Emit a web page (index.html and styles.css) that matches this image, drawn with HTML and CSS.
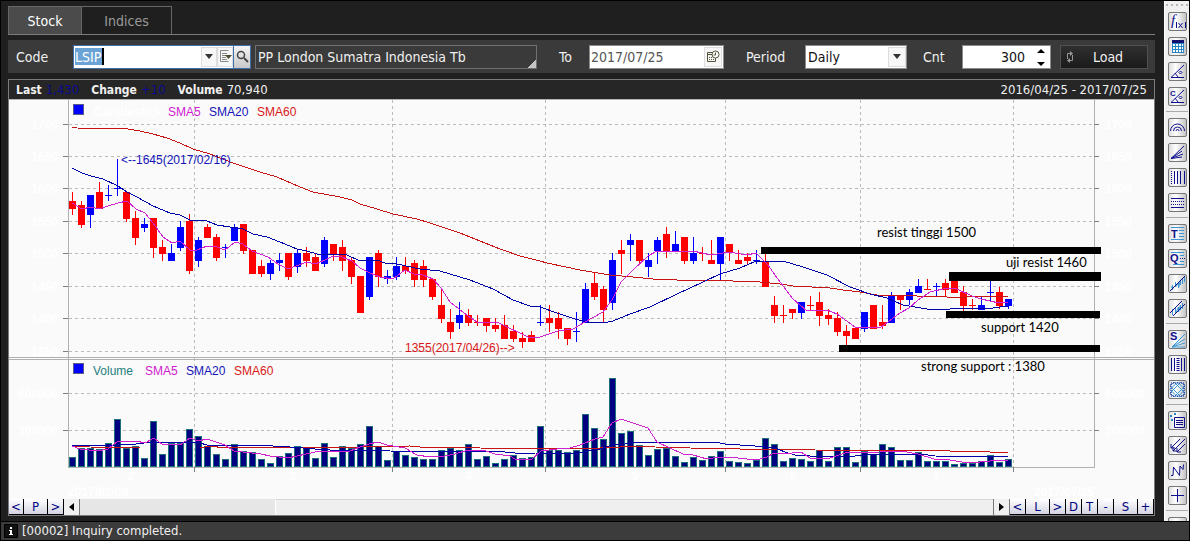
FILE: index.html
```html
<!DOCTYPE html>
<html lang="en">
<head>
<meta charset="utf-8">
<title>Stock chart</title>
<link rel="stylesheet" href="styles.css">
</head>
<body>
<div class="app">
  <div class="workspace">
    <main class="main">
      <nav class="tabs">
        <button class="tab tab-active" type="button">Stock</button>
        <button class="tab" type="button">Indices</button>
      </nav>

      <form class="controls">
        <label class="label" for="code">Code</label>
        <div class="field code-field">
          <input class="code-input" id="code" type="text" value="LSIP">
          <button class="mini" type="button" aria-label="Open list"><svg width="8" height="5" viewBox="0 0 8 5"><path d="M0 0h8L4 5z" fill="#333"/></svg></button>
          <button class="mini" type="button" aria-label="History"><svg width="13" height="13" viewBox="0 0 13 13"><path d="M9.500 .5h-8v11h8M3 3.500h5M3 5.500h4M3 7.500h4M3 9.500h5" fill="none" stroke="#888"/><path d="M6 5h7L9.500 9z" fill="#4d4a30"/></svg></button>
          <button class="search" type="button" aria-label="Search"><svg width="13" height="13" viewBox="0 0 13 13"><circle cx="5" cy="5" r="3.500" fill="none" stroke="#444" stroke-width="1.500"/><path d="M8 8l4 4" stroke="#444" stroke-width="2"/></svg></button>
        </div>
        <output class="name-box" for="code">PP London Sumatra Indonesia Tb</output>
        <label class="label label-to" for="date">To</label>
        <div class="field date-field">
          <input class="date-input" id="date" type="text" value="2017/07/25">
          <button class="mini mini-date" type="button" aria-label="Pick date"><svg width="13" height="13" viewBox="0 0 13 13"><path d="M.5 2.500h6M.5 2.500v9h8V8M.5 4.500h5" fill="none" stroke="#55533a"/><circle cx="8.500" cy="4.500" r="3.500" fill="#fff" stroke="#55533a"/><path d="M8.500 5V2.500M8.500 5h-2" stroke="#55533a" fill="none"/><path d="M2 7h1v1H2zM4 7h1v1H4zM2 9h1v1H2zM4 9h1v1H4zM6 9h1v1H6z" fill="#55533a"/></svg></button>
        </div>
        <label class="label label-period" for="period">Period</label>
        <div class="field select-field">
          <select class="select" id="period"><option>Daily</option><option>Weekly</option><option>Monthly</option></select>
          <span class="mini mini-select"><svg width="8" height="5" viewBox="0 0 8 5"><path d="M0 0h8L4 5z" fill="#333"/></svg></span>
        </div>
        <label class="label label-cnt" for="cnt">Cnt</label>
        <div class="field cnt-field">
          <input class="cnt-input" id="cnt" type="text" value="300">
          <div class="spin">
            <button class="spin-button" type="button" aria-label="More"><svg width="8" height="4" viewBox="0 0 8 4"><path d="M0 4h8L4 0z"/></svg></button>
            <button class="spin-button" type="button" aria-label="Fewer"><svg width="8" height="4" viewBox="0 0 8 4"><path d="M0 0h8L4 4z"/></svg></button>
          </div>
        </div>
        <button class="load" type="button"><svg width="8" height="12" viewBox="0 0 8 12"><path d="M5 2.500H1.500V8M3 9.500h3.500V4" fill="none" stroke="#999"/><path d="M4 0l3 2.500L4 5zM4 7L1 9.500 4 12z" fill="#999"/></svg><span class="load-text">Load</span></button>
      </form>

      <section class="panel">
        <div class="info">
          <b>Last</b><span class="info-value info-blue">1,430</span>
          <b>Change</b><span class="info-value info-blue">+10</span>
          <b>Volume</b><span class="info-value">70,940</span>
          <span class="info-range">2016/04/25 - 2017/07/25</span>
        </div>

        <svg class="chart" viewBox="9 100 1145 399" role="img" aria-label="Candlestick and volume chart">
          <g class="grid">
            <path d="M69 124.500H1094M69 156.500H1094M69 188.500H1094M69 221.500H1094M69 253.500H1094M69 286.500H1094M69 318.500H1094M69 351.500H1094M69 393.500H1094M69 430.500H1094"/>
            <path d="M194.500 100V467M392.500 100V467M545.500 100V467M725.500 100V467M860.500 100V467M1013.500 100V467"/>
          </g>
          <path class="axis" d="M68.500 100V467.500H1094.500V100M9 357.500H1154M9 359.500H1154"/>
          <path class="tick" d="M63 124.500h5M63 156.500h5M63 188.500h5M63 221.500h5M63 253.500h5M63 286.500h5M63 318.500h5M63 351.500h5M63 393.500h5M63 430.500h5M1094 124.500h5M1094 156.500h5M1094 188.500h5M1094 221.500h5M1094 253.500h5M1094 286.500h5M1094 318.500h5M1094 351.500h5M1094 393.500h5M1094 430.500h5M194.500 467v5M392.500 467v5M545.500 467v5M725.500 467v5M860.500 467v5M1013.500 467v5"/>
          <g class="faint faint-left">
            <text x="58" y="129">1700</text><text x="58" y="161">1650</text><text x="58" y="193">1600</text><text x="58" y="226">1550</text><text x="58" y="258">1500</text><text x="58" y="291">1450</text><text x="58" y="323">1400</text><text x="58" y="356">1350</text><text x="58" y="398">600000</text><text x="58" y="435">300000</text><text x="1094" y="496">2017/07/25</text>
          </g>
          <g class="faint">
            <text x="94" y="116">Candlestick</text>
            <text x="1105" y="129">1700</text><text x="1105" y="161">1650</text><text x="1105" y="193">1600</text><text x="1105" y="226">1550</text><text x="1105" y="258">1500</text><text x="1105" y="291">1450</text><text x="1105" y="323">1400</text><text x="1105" y="356">1350</text><text x="1105" y="398">600000</text><text x="1105" y="435">300000</text>
            <text x="128" y="480">2</text><text x="289" y="480">3</text><text x="465" y="480">4</text><text x="632" y="480">5</text><text x="790" y="480">6</text><text x="933" y="480">7</text><text x="68" y="496">2017/02/08</text>
          </g>
          <g id="volumes"></g>
          <g class="lines">
            <polyline class="sma60" points="72,446 90,447 140,448 200,448 210,446 225,448 360,447 410,446 420,447 470,447 480,448 580,449 620,447 640,446 655,447 690,448 740,449 765,450 790,449 815,450 950,451 990,452 1008,452"/>
            <polyline class="sma20" points="72,445 118,445 136,444 152,442 200,443 207,445 255,445 290,447 315,449 330,450 375,450 390,451 430,452 440,451 495,451 515,453 535,453 575,454 588,451 600,449 612,445 625,444 638,442 657,443 665,442 715,442 725,444 755,446 775,448 785,452 795,455 810,456 855,456 880,454 920,454 935,456 1008,457"/>
            <polyline class="sma5" points="72,446 80,449 97,451 108,449 118,441 136,441 145,443 154,438 163,445 172,444 180,445 190,438 198,441 207,439 216,442 225,445 234,451 243,452 261,454 270,456 288,458 306,454 320,451 350,451 360,447 369,444 378,442 387,445 405,448 417,455 430,457 445,456 455,454 468,450 486,451 495,454 510,456 515,459 532,459 541,451 557,449 570,448 580,445 595,439 603,437 612,423 621,419 648,428 657,442 670,448 683,454 693,455 707,459 720,457 738,458 756,460 767,457 774,453 792,453 801,452 810,458 830,458 845,453 880,452 901,451 918,454 934,459 950,460 962,462 980,462 990,461 1008,460"/>
          </g>
          <g id="candles"></g>
          <g class="lines">
            <polyline class="sma60" points="72,127 77,128 128,129 140,131 153,134 167,138 180,143 193,149 210,154 220,158 233,163 260,172 277,177 300,187 313,192 340,197 352,200 360,204 377,209 393,214 417,219 430,223 460,233 480,241 500,249 520,256 540,261 547,263 580,270 610,275 633,277 653,279 677,280 720,280 733,281 760,282 780,284 793,286 830,288 843,290 860,292 877,295 893,295 917,296 947,297 967,297 993,296 1008,297"/>
            <polyline class="sma20" points="72,168 82,173 91,176 103,179 118,186 127,192 137,197 153,206 170,213 180,215 190,220 207,221 217,225 243,229 253,234 267,237 280,242 297,249 307,251 317,254 347,255 360,261 377,260 385,263 397,264 420,269 440,271 470,280 493,289 513,300 530,306 540,307 557,313 575,319 587,322 603,323 613,321 630,314 650,307 677,294 703,282 720,274 740,268 756,261 783,261 803,267 827,275 850,287 870,294 887,298 903,305 927,309 950,309 973,308 993,308 1008,306"/>
            <polyline class="sma5" points="72,203 82,209 91,207 99,209 108,206 118,203 127,201 136,209 145,213 153,223 163,237 172,243 180,241 190,250 197,250 207,246 217,247 225,250 235,242 243,244 252,251 268,257 278,264 288,269 307,262 315,264 325,260 333,256 342,257 352,261 360,268 370,273 380,277 393,279 405,270 414,274 423,275 433,279 441,288 450,302 459,309 468,316 477,322 497,322 507,327 520,333 528,337 540,337 558,331 573,329 585,322 603,312 612,300 621,282 633,270 648,256 657,251 693,251 711,255 729,252 747,255 756,253 768,265 780,282 793,299 807,311 827,310 837,314 855,327 880,328 893,318 900,313 909,308 918,300 930,292 947,288 957,289 972,296 981,299 999,303 1008,302"/>
          </g>
          <g class="key"><rect x="73.500" y="104.500" width="10" height="10"/><rect x="73.500" y="363.500" width="10" height="10"/></g>
          <g class="legend">
            <text class="t-pink" x="168" y="116">SMA5</text><text class="t-blue" x="209" y="116">SMA20</text><text class="t-red" x="257" y="116">SMA60</text>
            <text class="t-teal" x="93" y="375">Volume</text><text class="t-pink" x="145" y="375">SMA5</text><text class="t-blue" x="186" y="375">SMA20</text><text class="t-red" x="234" y="375">SMA60</text>
            <text class="t-blue" x="121" y="164">&lt;--1645(2017/02/16)</text>
            <text class="t-red" x="405" y="352">1355(2017/04/26)--&gt;</text>
          </g>
          <path class="levels" d="M761 247h340v7H761zM949 272h152v9H949zM946 311h154v7H946zM839 345h261v7H839z"/>
          <g class="notes">
            <text x="877" y="237">resist tinggi 1500</text><text x="1006" y="267">uji resist 1460</text><text x="981" y="332">support 1420</text><text x="921" y="371">strong support : 1380</text>
          </g>
        </svg>

        <div class="scroller">
          <button class="step step-first" type="button">&lt;</button><button class="step step-wide" type="button">P</button><button class="step" type="button">&gt;</button>
          <button class="arrow" type="button" aria-label="Scroll left"><svg width="5" height="8" viewBox="0 0 5 8"><path d="M5 0v8L0 4z"/></svg></button>
          <div class="track"><div class="track-gap"></div><div class="thumb"></div></div>
          <button class="arrow arrow-right" type="button" aria-label="Scroll right"><svg width="5" height="8" viewBox="0 0 5 8"><path d="M0 0v8l5-4z"/></svg></button>
          <button class="step" type="button">&lt;</button><button class="step step-wide" type="button">L</button><button class="step" type="button">&gt;</button><button class="step" type="button">D</button><button class="step" type="button">T</button><button class="step" type="button">-</button><button class="step step-wide" type="button">S</button><button class="step" type="button">+</button>
        </div>
      </section>
    </main>

    <aside class="tools">
      <div class="grip"></div>
      <button class="tool" type="button" aria-label="Function"><svg viewBox="1 1 17 17"><text class="fx" x="3" y="13">f</text><path d="M8.500 10v6M17.500 10v6M10.500 11l4 5M14.500 11l-4 5"/></svg></button>
      <button class="tool" type="button" aria-label="Table"><svg viewBox="1 1 17 17"><path d="M4 3h12v13H4z" class="fill-sky"/><path d="M4 3h12v3H4z" class="fill-navy"/><path d="M5 7h2v2H5zM8 7h2v2H8zM11 7h2v2h-2zM14 7h1v2h-1zM5 10h2v2H5zM8 10h2v2H8zM11 10h2v2h-2zM14 10h1v2h-1zM5 13h2v2H5zM8 13h2v2H8zM11 13h2v2h-2zM14 13h1v2h-1z" class="fill-white"/></svg></button>
      <button class="tool" type="button" aria-label="Angle"><svg viewBox="1 1 17 17"><path d="M16 3L3 15.500h13M7 11l3 4M12.500 9l1.500 1.500-1.500 1.500-1.500-1.500z"/></svg></button>
      <button class="tool" type="button" aria-label="Copied angle"><svg viewBox="1 1 17 17"><path d="M16 3L3 15.500h13M7 11l3 4M12.500 9l1.500 1.500-1.500 1.500-1.500-1.500z"/><text class="letter-small" x="2" y="9">C</text></svg></button>
      <hr class="rule">
      <button class="tool" type="button" aria-label="Arcs"><svg viewBox="1 1 17 17"><path d="M2.500 13a7 7 0 0 1 14 0M5.500 13a4 4 0 0 1 8 0M8 13a1.500 1.500 0 0 1 3 0"/></svg></button>
      <button class="tool" type="button" aria-label="Fan"><svg viewBox="1 1 17 17"><path d="M3 15.500L16 3M3 15.500L14 8M3 15.500L15 11M3 15.500L14 14"/></svg></button>
      <button class="tool" type="button" aria-label="Time zones"><svg viewBox="1 1 17 17"><path d="M6.500 3v13M9.500 3v13M12.500 3v13M16.500 3v13"/><path d="M3.500 3v13" class="dotted"/></svg></button>
      <button class="tool" type="button" aria-label="Levels"><svg viewBox="1 1 17 17"><path d="M3 5.500h13M3 14.500h13"/><path d="M3 8.500h13M3 11.500h13" class="dotted"/></svg></button>
      <hr class="rule">
      <button class="tool" type="button" aria-label="Text"><svg viewBox="1 1 17 17"><path d="M3 3.500h13M11 6.500h5M11 9.500h5M11 12.500h5M3 15.500h13" class="sky"/><text class="letter" x="3" y="14">T</text></svg></button>
      <button class="tool" type="button" aria-label="Quote"><svg viewBox="1 1 17 17"><path d="M3 3.500h13M12 6.500h4M12 12.500h4M5 15.500h11" class="sky"/><path d="M12 9.500h5" class="dotted"/><text class="letter" x="2" y="13">Q</text></svg></button>
      <button class="tool" type="button" aria-label="Trend"><svg viewBox="1 1 17 17"><path d="M4.500 11v5M3 13l3 1M7.500 8v5l3-4v5l2-8v5M14.500 4v6M16.500 2v6" class="sky"/><path d="M2 17L17 2"/></svg></button>
      <button class="tool" type="button" aria-label="Channel"><svg viewBox="1 1 17 17"><path d="M4.500 10v6M7.500 8v6l3-6v5l2-7v5M14.500 4v6" class="sky"/><path d="M2 14L14 2M5 17L17 5"/></svg></button>
      <hr class="rule">
      <button class="tool" type="button" aria-label="Speed lines"><svg viewBox="1 1 17 17"><path d="M4 17L17 4M4 17L17 9M4 17l13-4M4 17h13" class="sky"/><text class="letter" x="2" y="10">S</text></svg></button>
      <button class="tool" type="button" aria-label="Cycle"><svg viewBox="1 1 17 17"><path d="M3.500 3v13M6.500 3v13M13.500 3v13M16.500 3v13"/><path d="M10 3v13" class="ladder"/></svg></button>
      <button class="tool" type="button" aria-label="Pattern"><svg viewBox="1 1 17 17"><path d="M2 6l4-4 11 11-4 4L2 6M2 13L13 2l4 4L6 17l-4-4M2 9.500L9.500 2 17 9.500 9.500 17z" class="sky"/><path d="M3 3h13v13H3z" class="dotted"/></svg></button>
      <hr class="rule">
      <button class="tool" type="button" aria-label="Notes"><svg viewBox="1 1 17 17"><path d="M2 4h2v2H2zM6 2h2v2H6zM3 8h2v2H3z" class="fill-sky"/><path d="M6.500 6.500h10v10h-10zM8 9.500h7M8 11.500h7M8 13.500h7"/></svg></button>
      <button class="tool" type="button" aria-label="Arrows"><svg viewBox="1 1 17 17"><path d="M12 3l-9 9M17 3L5 15M17 8l-8 8M3 8v4h4M5 11v4h4M9 12v4h4"/></svg></button>
      <button class="tool" type="button" aria-label="Zigzag"><svg viewBox="1 1 17 17"><path d="M3 14.500h2L5.500 6l6 8.500L12 5l3 3.500 .5-5"/></svg></button>
      <button class="tool" type="button" aria-label="Crosshair"><svg viewBox="1 1 17 17"><path d="M9.500 3v13M3 9.500h13"/></svg></button>
      <hr class="rule">
      <button class="tool" type="button" aria-label="More tools"></button>
    </aside>
  </div>

  <footer class="status"><svg class="status-icon" width="14" height="14" viewBox="0 0 14 14"><path d="M.5.5h13v13H.5z" fill="#111" stroke="#000"/><path d="M6 3h2v2H6zM5 6h3v4h1v1H5v-1h1V7H5z" fill="#fff"/></svg><span>[00002] Inquiry completed.</span></footer>
</div>
<script src="chart.js"></script>
</body>
</html>
```
FILE: chart.js
```js
// Each candle: colour, then the y of its high, body top, body bottom and low.
const candles = `R 192 201 209 215|R 201 205 225 228|B 195 195 215 228|R 182 192 209 209|B 185 195 196 201|B 159 188 189 196|R 192 192 219 222|R 211 218 238 245|B 218 224 228 232|R 218 218 248 258|R 240 247 254 261|B 244 253 261 261|B 221 227 248 251|R 214 221 271 274|B 237 240 261 267|R 224 227 238 238|R 234 237 258 261|B 244 247 248 258|B 224 227 241 241|R 224 224 251 254|R 250 250 274 274|R 260 266 274 277|B 260 263 274 280|B 253 260 263 271|R 253 253 277 280|B 250 253 267 273|R 247 253 261 267|R 254 257 271 271|B 237 240 264 267|R 244 244 255 261|R 240 247 261 271|R 257 260 277 284|R 276 276 313 313|B 257 257 297 300|R 250 253 277 287|B 270 276 279 284|B 257 266 277 280|R 257 266 271 274|R 260 263 280 287|R 260 266 280 287|R 279 279 297 300|R 288 305 319 323|R 309 322 332 339|B 302 315 323 329|R 309 315 323 326|R 315 322 323 326|R 318 318 326 332|R 318 325 329 332|R 315 325 339 339|R 325 331 339 342|R 332 338 342 348|R 331 335 342 342|B 305 322 323 326|R 305 318 323 332|R 312 318 329 339|R 328 328 339 345|B 312 331 332 342|B 283 289 323 323|R 273 283 297 300|R 286 289 310 323|B 253 260 303 310|R 240 250 254 274|B 234 240 245 261|R 240 240 261 264|B 253 260 267 277|B 237 240 251 264|R 227 234 251 258|B 231 244 251 251|R 237 237 261 264|B 237 253 261 264|R 247 253 254 261|R 240 260 264 264|B 237 237 264 280|R 244 244 253 261|R 250 260 264 264|R 253 257 261 264|B 250 260 261 264|R 253 261 287 287|R 296 305 316 323|R 305 315 316 323|R 309 309 313 319|B 302 302 313 319|R 296 305 306 311|R 292 302 316 326|R 309 315 319 325|R 312 318 332 336|R 325 331 336 345|R 328 328 339 339|B 312 312 329 332|R 305 305 329 329|R 305 322 326 329|B 292 296 323 323|R 295 295 300 310|B 289 292 300 305|B 279 286 293 293|R 279 289 290 290|B 283 286 287 296|R 279 283 290 296|R 280 280 293 293|R 286 292 306 311|R 299 305 306 310|B 296 305 310 310|B 280 292 293 301|R 287 292 306 309|B 299 299 306 309`
  .split("|").map((row) => row.split(" "));

// Bar heights of the volume pane.
const volumes = [10,19,19,18,24,48,19,21,9,46,13,24,24,38,31,21,13,8,23,16,15,8,4,11,14,21,19,9,24,10,21,19,23,41,21,7,16,12,10,8,8,17,19,17,23,8,11,4,8,12,9,10,41,17,17,15,17,53,39,28,89,34,36,22,12,18,19,11,5,10,7,11,16,6,5,4,7,29,23,6,9,8,6,17,6,20,20,5,16,13,23,20,7,7,15,6,6,6,3,4,4,6,12,5,8];

const SVG = "http://www.w3.org/2000/svg";
const FIRST_X = 69, STEP = 9, BODY = 7, BASE = 467;

function addRect(parent, className, x, y, width, height) {
  const rect = document.createElementNS(SVG, "rect");
  Object.entries({ class: className, x, y, width, height })
    .forEach(([name, value]) => rect.setAttribute(name, value));
  parent.append(rect);
}

const candleLayer = document.getElementById("candles");
candles.forEach(([colour, high, top, bottom, low], i) => {
  const x = FIRST_X + i * STEP;
  const className = colour === "R" ? "down" : "up";
  addRect(candleLayer, className, x + 3, +high, 1, low - high);
  addRect(candleLayer, className, x, +top, BODY, bottom - top);
});

const volumeLayer = document.getElementById("volumes");
volumes.forEach((height, i) => {
  addRect(volumeLayer, "volume", FIRST_X + i * STEP + 0.5, BASE - height + 0.5, BODY - 1, height - 1);
});
```
FILE: styles.css
```css
* { box-sizing: border-box; }

body {
  margin: 0;
  background: #1f1f1f;
  color: #f0f0f0;
  font: 14px/20px Tahoma, "DejaVu Sans Condensed", "Noto Sans", sans-serif;
}

button, input, select { font: inherit; color: inherit; }

button {
  display: flex;
  align-items: center;
  justify-content: center;
  margin: 0;
  padding: 0;
  border: 0;
  background: none;
}

.app {
  display: flex;
  flex-direction: column;
  min-height: 100vh;
  border-top: 1px solid #000;
  border-left: 1px solid #000;
}

.workspace { display: flex; flex: 1; }

.main {
  display: flex;
  flex: 1;
  flex-direction: column;
  min-width: 0;
  padding: 5px 9px 5px 7px;
}

/* Tabs */
.tabs { display: flex; height: 29px; border-bottom: 1px solid #7b7b82; }
.tab {
  width: 90px;
  border: 1px solid #66666c;
  border-width: 1px 1px 0 0;
  color: #999;
}
.tab-active { width: 74px; border-left-width: 1px; background: #4b4b4b; color: #fff; }

/* Query form */
.controls {
  display: flex;
  align-items: center;
  height: 33px;
  margin: 5px 0 6px;
  padding: 0 7px 0 8px;
  background: #3a3a3a;
}
.label { width: 57px; }
.label-to { width: 52px; padding-left: 22px; }
.label-period { width: 81px; padding-left: 22px; }
.label-cnt { width: 55px; padding-left: 16px; }
.field {
  display: flex;
  height: 24px;
  border: 1px solid #8c8c8c;
  background: #fff;
  color: #111;
}
.field input, .select {
  flex: 1;
  min-width: 0;
  padding: 0 1px;
  border: 0;
  outline: 0;
  background: #fff;
}
.code-field { width: 178px; border-color: #3f6ea8; }
.field .code-input {
  background: linear-gradient(90deg, #6ba3d6 27px, #000 27px, #000 29px, #fff 29px) 1px 2px / 100% 17px no-repeat;
  color: #fff;
}
.mini {
  width: 16px;
  margin: 1px 0;
  border: 1px solid #ddd;
  background: #f7f7f7;
}
.mini-date { width: 18px; margin-right: 1px; }
.search {
  width: 17px;
  border-left: 1px solid #3f6ea8;
  background: linear-gradient(#f4f4f4, #c8c8c8);
}
.name-box {
  flex: 1;
  height: 24px;
  margin-left: 4px;
  padding: 1px 2px;
  border: 1px solid #707070;
  background: linear-gradient(135deg, transparent 50%, #c4c4c4 50%) right bottom / 9px 9px no-repeat;
  overflow: hidden;
  white-space: nowrap;
}
.date-field { width: 135px; }
.field .date-input { color: #555; }
.select-field { position: relative; width: 102px; }
.select { appearance: none; padding: 0 2px; }
.mini-select {
  position: absolute;
  top: 0;
  right: 0;
  bottom: 0;
  display: flex;
  align-items: center;
  justify-content: center;
  width: 18px;
  pointer-events: none;
}
.cnt-field { width: 89px; }
.field .cnt-input { text-align: right; }
.spin {
  display: flex;
  flex-direction: column;
  justify-content: space-between;
  width: 24px;
  padding: 3px 4px 2px 10px;
}
.spin-button { height: 4px; }
.load {
  width: 88px;
  height: 24px;
  margin-left: 9px;
  padding: 0 5px;
  border: 1px solid #505050;
  background: linear-gradient(#303030, #1a1a1a);
}
.load-text { flex: 1; }

/* Chart panel */
.panel { border: 1px solid #7b7b82; background: #fafafa; }
.info {
  display: flex;
  align-items: center;
  height: 20px;
  padding: 0 7px;
  border-bottom: 1px solid #b4b4b4;
  background: #262626;
  font-size: 13px;
}
.info b { font-size: 12px; }
.info-value { margin: 0 12px 0 4px; }
.info-blue { color: #0a0a90; }
.info-range { margin-left: auto; }

.chart {
  display: block;
  width: 100%;
  height: auto;
  font: 12px "Liberation Sans", Arial, sans-serif;
}
.grid, .axis, .tick, .lines, .key { fill: none; shape-rendering: crispEdges; }
.grid { stroke: #bbb; stroke-dasharray: 3 3; }
.axis { stroke: #b0b0b0; }
.tick { stroke: #808080; }
.faint { fill: #fff; font-weight: bold; }
.faint-left { text-anchor: end; }
.key rect { fill: #00f; stroke: #5a5a8c; }
.up { fill: #00f; shape-rendering: crispEdges; }
.down { fill: #f00; shape-rendering: crispEdges; }
.volume { fill: #000080; stroke: #1d6f78; shape-rendering: crispEdges; }
.sma5 { stroke: #d020d0; }
.sma20 { stroke: #0000a8; }
.sma60 { stroke: #c81414; }
.t-pink { fill: #d020d0; }
.t-blue { fill: #1414b8; }
.t-red { fill: #d81818; }
.t-teal { fill: #1d7f80; }
.notes { font: 13px Lato, Calibri, sans-serif; }

/* Scroll row */
.scroller { display: flex; height: 16px; }
.step {
  width: 16px;
  border: 1px solid #000;
  border-width: 0 1px 1px 0;
  background: linear-gradient(#fff, #d4d4e2);
  color: #000080;
  font-size: 13px;
  line-height: 15px;
}
.step-first { width: 15px; }
.step-wide { width: 24px; }
.arrow { width: 16px; border-right: 1px solid #777; background: #f0f0f0; }
.arrow-right { width: 17px; border-left: 1px solid #777; }
.track { display: flex; flex: 1; background: #e6e6e6; }
.track-gap { flex: 195; }
.thumb { flex: 718; border-top: 1px solid #d8d8d8; border-left: 1px solid #fff; background: #efefef; }

/* Tool strip: takes the height of the main column and clips what does not fit */
.tools {
  display: flex;
  flex-direction: column;
  align-items: center;
  gap: 6px;
  width: 26px;
  contain: size;
  padding-top: 3px;
  border-right: 1px solid #000;
  border-left: 1px solid #fff;
  background: #f0f0f0;
  overflow: hidden;
}
.grip {
  flex: none;
  width: 22px;
  height: 2px;
  background: repeating-linear-gradient(90deg, #b8b8b8 0 2px, transparent 2px 5px);
}
.tool {
  flex: none;
  width: 19px;
  height: 19px;
  border: 1px solid #777;
  border-radius: 2px;
  background: linear-gradient(90deg, #ddd, #fff 40%, #c4c4c4);
}
.tool svg { width: 17px; height: 17px; fill: none; stroke: #10108c; }
.tool text { fill: #10108c; stroke: none; font-family: "Liberation Sans", Arial, sans-serif; }
.tool .fx { font: italic 15px "Liberation Serif", serif; }
.tool .letter { font-size: 11px; font-weight: bold; }
.tool .letter-small { font-size: 8px; font-weight: bold; }
.tool .sky { stroke: #3c96d2; }
.tool .fill-sky { fill: #2b86c5; stroke: none; }
.tool .fill-navy { fill: #10106c; stroke: none; }
.tool .fill-white { fill: #fff; stroke: none; }
.tool .dotted { stroke-dasharray: 1 1; }
.tool .ladder { stroke-width: 3; stroke-dasharray: 1 1; }
.rule {
  flex: none;
  width: 22px;
  height: 1px;
  margin: -1px 0 0;
  border: 0;
  background: #aaa;
}

/* Status bar */
.status {
  display: flex;
  align-items: center;
  gap: 4px;
  height: 20px;
  padding-left: 3px;
  border: 1px solid #000;
  border-left: 0;
  background: #3c3c3c;
  font-size: 13px;
}
```
